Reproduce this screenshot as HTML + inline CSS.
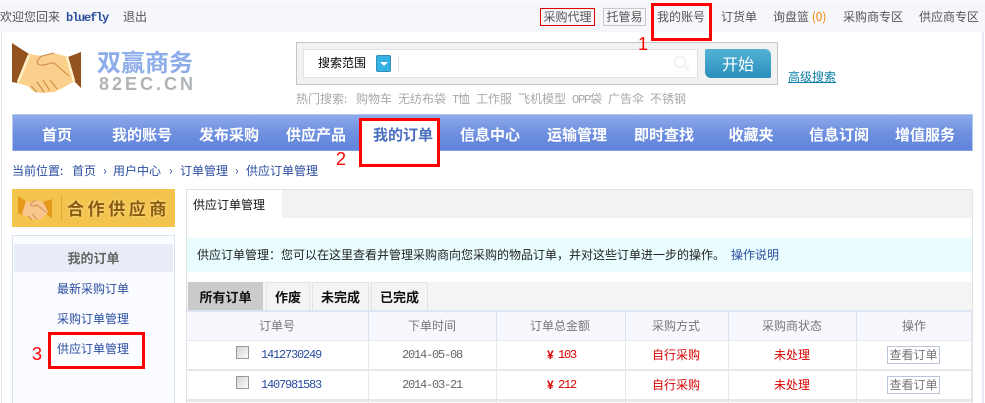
<!DOCTYPE html>
<html lang="zh-CN"><head><meta charset="utf-8"><title>供应订单管理</title>
<style>
html,body{margin:0;padding:0;background:#fff}
body{width:985px;height:403px;position:relative;overflow:hidden;font:12px/16px "WenQuanYi Zen Hei","Noto Sans CJK SC","Liberation Sans",sans-serif;color:#555}
.a{position:absolute;white-space:nowrap}
.b{position:absolute;box-sizing:border-box}
.c{position:absolute;white-space:nowrap;text-align:center;transform:translateX(-50%)}
.blue{color:#2a4d9f}
.red{color:#d80000}
.hot{position:absolute;top:91px;white-space:nowrap;color:#a8a8a8}
.nav{position:absolute;top:125px;font-size:15px;line-height:20px;font-weight:bold;color:#fff;white-space:nowrap;transform:translateX(-50%)}
.mono{font-family:"Liberation Mono",monospace;letter-spacing:-1.2px}
.rb{position:absolute;box-sizing:border-box;border:3px solid #f00}
.num{position:absolute;color:#f00;font:18px/20px "Liberation Sans",sans-serif}
.tab{position:absolute;box-sizing:border-box;top:282px;height:29px;background:#f4f4f4;border:1px solid #e2e2e2;border-bottom:0;text-align:center;line-height:28px;font-size:13px;font-weight:bold;color:#111}
.v{position:absolute;top:311px;width:1px;height:92px;background:#e4e8ef}
.vh{position:absolute;top:311px;width:1px;height:29px;background:#d8e2f0}
.cb{position:absolute;box-sizing:border-box;left:236px;width:13px;height:13px;border:1px solid #999;background:linear-gradient(135deg,#d4d4d4,#fbfbfb)}
.btn{position:absolute;box-sizing:border-box;left:887px;width:53px;height:18px;border:1px solid #b9c6d8;background:#fff;text-align:center;line-height:16px;color:#777}
</style></head><body>

<!-- frame and top bar -->
<div class="b" style="left:0;top:0;width:985px;height:32px;background:#f6f7fb"></div>
<div class="b" style="left:0;top:0;width:985px;height:2px;background:#fafafc"></div>
<div class="b" style="left:1px;top:32px;width:1px;height:371px;background:#dfe5f0"></div>
<div class="b" style="left:982px;top:32px;width:2px;height:371px;background:#e4e8f1"></div>

<div class="a" style="left:0;top:9px;color:#555">欢迎您回来</div>
<div class="a mono" style="left:66px;top:10px;color:#2a4d9f;font-weight:bold">bluefly</div>
<div class="a" style="left:123px;top:9px">退出</div>

<div class="b" style="left:540px;top:8px;width:55px;height:18px;border:1px solid #e00000;text-align:center;line-height:16px">采购代理</div>
<div class="b" style="left:603px;top:8px;width:43px;height:18px;border:1px solid #c9c9c9;text-align:center;line-height:16px">托管易</div>
<div class="a" style="left:657px;top:9px">我的账号</div>
<div class="a" style="left:721px;top:9px">订货单</div>
<div class="a" style="left:773px;top:9px">询盘篮 <span style="color:#f08300">(0)</span></div>
<div class="a" style="left:843px;top:9px">采购商专区</div>
<div class="a" style="left:919px;top:9px">供应商专区</div>

<!-- logo -->
<svg class="a" style="left:12px;top:42px" width="72" height="54" viewBox="0 0 72 54">
<path d="M0 1L17 12L5 41L0 40Z" fill="#94521f"/>
<path d="M69 10L56 15L63 40L69 46Z" fill="#94521f"/>
<path d="M17 12L5 41L16 44L22 50L30 51L43 50L63 39L56 15L42 11L30 14Z" fill="#fbd08c"/>
<path d="M17 13L6 40M55 15L62 39" stroke="#fff2c8" stroke-width="2.5" fill="none"/>
<path d="M42 11L30 14C24 18 24 22 28 23C34 24 38 20 42 21L57 34M19 44L25 50M25 40L32 50M31 38L38 49M38 38L45 47" stroke="#c88c48" stroke-width="1.1" fill="none"/>
</svg>
<div class="a" style="left:97px;top:46px;font-size:24px;line-height:30px;font-weight:bold;color:#8cacea">双赢商务</div>
<div class="a" style="left:99px;top:74px;font:bold 18px/20px 'Liberation Sans',sans-serif;color:#b0b3b6;letter-spacing:3px">82EC.CN</div>

<!-- search -->
<div class="b" style="left:296px;top:42px;width:482px;height:43px;background:#f3f2f2;border:1px solid #c6c6c6"></div>
<div class="b" style="left:303px;top:49px;width:395px;height:29px;background:#fff;border:1px solid #e2e2e2"></div>
<div class="a" style="left:318px;top:55px;color:#000">搜索范围</div>
<div class="b" style="left:376px;top:55px;width:15px;height:17px;background:#35b1e6;border:1px solid #2f8fb8;border-radius:2px"></div>
<div class="b" style="left:380px;top:62px;width:0;height:0;border:4px solid transparent;border-top:4px solid #fff;border-bottom:0"></div>
<div class="b" style="left:398px;top:55px;width:1px;height:17px;background:#e2e2e2"></div>
<svg class="a" style="left:671px;top:54px" width="20" height="18" viewBox="0 0 20 18"><circle cx="9" cy="8" r="5.5" fill="none" stroke="#f2f2f2" stroke-width="2"/><path d="M13 12L18 16" stroke="#f2f2f2" stroke-width="2.5"/></svg>
<div class="b" style="left:705px;top:49px;width:66px;height:29px;background:linear-gradient(#54b2d2,#2a8fbd);border-radius:2px 6px 2px 6px;color:#fff;font-size:16px;line-height:29px;text-align:center">开始</div>
<div class="a" style="left:788px;top:69px;color:#0b7fa5;text-decoration:underline">高级搜索</div>
<div class="hot" style="left:296px">热门搜索:</div>
<div class="hot" style="left:356px">购物车</div>
<div class="hot" style="left:398px">无纺布袋</div>
<div class="hot" style="left:452px"><span class="mono">T</span>恤</div>
<div class="hot" style="left:476px">工作服</div>
<div class="hot" style="left:518px">飞机模型</div>
<div class="hot" style="left:572px"><span class="mono">OPP</span>袋</div>
<div class="hot" style="left:608px">广告伞</div>
<div class="hot" style="left:650px">不锈钢</div>

<!-- nav -->
<div class="b" style="left:12px;top:114px;width:961px;height:37px;background:linear-gradient(#8eabec 0,#7192e0 45%,#6084db 100%);border:1px solid #b4c8e8;border-bottom-color:#7f9fe4"></div>
<div class="b" style="left:362px;top:121px;width:75px;height:43px;background:#fff"></div>
<div class="nav" style="left:57px">首页</div>
<div class="nav" style="left:142px">我的账号</div>
<div class="nav" style="left:229px">发布采购</div>
<div class="nav" style="left:316px">供应产品</div>
<div class="nav" style="left:403px;color:#4a6fbe">我的订单</div>
<div class="nav" style="left:490px">信息中心</div>
<div class="nav" style="left:577px">运输管理</div>
<div class="nav" style="left:664px">即时查找</div>
<div class="nav" style="left:751px">收藏夹</div>
<div class="nav" style="left:839px">信息订阅</div>
<div class="nav" style="left:925px">增值服务</div>

<!-- breadcrumb -->
<div class="a blue" style="left:12px;top:163px">当前位置:</div>
<div class="a blue" style="left:72px;top:163px">首页</div>
<div class="a blue" style="left:103px;top:163px">›</div>
<div class="a blue" style="left:113px;top:163px">用户中心</div>
<div class="a blue" style="left:169px;top:163px">›</div>
<div class="a blue" style="left:180px;top:163px">订单管理</div>
<div class="a blue" style="left:235px;top:163px">›</div>
<div class="a blue" style="left:246px;top:163px">供应订单管理</div>

<!-- sidebar -->
<div class="b" style="left:12px;top:189px;width:163px;height:38px;background:#f2c44e"></div>
<svg class="a" style="left:17px;top:195px" width="38" height="26" viewBox="0 0 38 26">
<path d="M1 1L9 6L5 20L1 18Z M35 4L26 7L30 20L35 23Z" fill="#e59a1e"/>
<path d="M9 6L5 19L12 22L16 25L24 24L31 17L26 7L19 5L14 7Z" fill="#f8c58d"/>
<path d="M19 5L14 8C12 11 16 12 20 10L29 17M11 21L15 25M15 19L20 24" stroke="#b87a3a" stroke-width=".7" fill="none"/>
</svg>
<div class="b" style="left:61px;top:195px;width:1px;height:26px;background:#e3a93a"></div>
<div class="a" style="left:67px;top:198px;font-size:17px;line-height:20px;font-weight:bold;color:#8a5a12;letter-spacing:3.6px;text-shadow:0 0 3px #fbe59a">合作供应商</div>

<div class="b" style="left:12px;top:235px;width:163px;height:168px;background:#fbfcff;border:1px solid #d9e2f0;border-bottom:0"></div>
<div class="b" style="left:14px;top:244px;width:159px;height:28px;background:#e8ecf6;text-align:center;line-height:28px;font-size:13px;font-weight:bold;color:#666">我的订单</div>
<div class="c blue" style="left:93px;top:281px">最新采购订单</div>
<div class="c blue" style="left:93px;top:311px">采购订单管理</div>
<div class="c blue" style="left:93px;top:341px">供应订单管理</div>

<!-- main -->
<div class="b" style="left:186px;top:189px;width:787px;height:214px;background:#fff;border:1px solid #e2e2e2;border-bottom:0"></div>
<div class="b" style="left:282px;top:190px;width:690px;height:28px;background:#f2f2f2"></div>
<div class="a" style="left:193px;top:197px;color:#111">供应订单管理</div>
<div class="b" style="left:187px;top:238px;width:785px;height:34px;background:#e9fdff"></div>
<div class="a" style="left:197px;top:247px;color:#222">供应订单管理：您可以在这里查看并管理采购商向您采购的物品订单，并对这些订单进一步的操作。</div>
<div class="a blue" style="left:731px;top:247px">操作说明</div>

<!-- tabs -->
<div class="b" style="left:187px;top:282px;width:785px;height:29px;background:#f4f4f4"></div>
<div class="tab" style="left:188px;width:75px;background:#cbcbcb;border-color:#cbcbcb">所有订单</div>
<div class="tab" style="left:266px;width:44px;background:#f4f4f4">作废</div>
<div class="tab" style="left:312px;width:57px">未完成</div>
<div class="tab" style="left:371px;width:57px">已完成</div>

<!-- table -->
<div class="b" style="left:187px;top:310px;width:785px;height:2px;background:#dde5f2"></div>
<div class="b" style="left:187px;top:312px;width:785px;height:28px;background:#f6f8fd"></div>
<div class="b" style="left:187px;top:340px;width:785px;height:1px;background:#e4e8ef"></div>
<div class="b" style="left:187px;top:369px;width:785px;height:2px;background:#e8e8e8"></div>
<div class="b" style="left:187px;top:399px;width:785px;height:3px;background:#e8e8e8"></div>
<div class="v" style="left:368px"></div><div class="v" style="left:496px"></div><div class="v" style="left:625px"></div><div class="v" style="left:728px"></div><div class="v" style="left:856px"></div><div class="v" style="left:971px"></div>
<div class="vh" style="left:368px"></div><div class="vh" style="left:496px"></div><div class="vh" style="left:625px"></div><div class="vh" style="left:728px"></div><div class="vh" style="left:856px"></div>

<div class="c" style="left:277px;top:318px;color:#777">订单号</div>
<div class="c" style="left:432px;top:318px;color:#777">下单时间</div>
<div class="c" style="left:560px;top:318px;color:#777">订单总金额</div>
<div class="c" style="left:676px;top:318px;color:#777">采购方式</div>
<div class="c" style="left:792px;top:318px;color:#777">采购商状态</div>
<div class="c" style="left:914px;top:318px;color:#777">操作</div>

<div class="cb" style="top:346px"></div>
<div class="a blue mono" style="left:261px;top:347px">1412730249</div>
<div class="a mono" style="left:402px;top:347px;color:#666">2014-05-08</div>
<div class="a red" style="left:547px;top:347px;font-family:'Liberation Sans',sans-serif;font-weight:bold">¥</div>
<div class="a red mono" style="left:558px;top:347px">103</div>
<div class="c red" style="left:676px;top:347px">自行采购</div>
<div class="c red" style="left:792px;top:347px">未处理</div>
<div class="btn" style="top:346px">查看订单</div>

<div class="cb" style="top:376px"></div>
<div class="a blue mono" style="left:261px;top:377px">1407981583</div>
<div class="a mono" style="left:402px;top:377px;color:#666">2014-03-21</div>
<div class="a red" style="left:547px;top:377px;font-family:'Liberation Sans',sans-serif;font-weight:bold">¥</div>
<div class="a red mono" style="left:558px;top:377px">212</div>
<div class="c red" style="left:676px;top:377px">自行采购</div>
<div class="c red" style="left:792px;top:377px">未处理</div>
<div class="btn" style="top:376px">查看订单</div>

<!-- annotations -->
<div class="rb" style="left:651px;top:3px;width:61px;height:38px"></div>
<div class="rb" style="left:359px;top:118px;width:81px;height:49px"></div>
<div class="rb" style="left:48px;top:332px;width:97px;height:37px"></div>
<div class="num" style="left:638px;top:34px">1</div>
<div class="num" style="left:336px;top:149px">2</div>
<div class="num" style="left:32px;top:344px">3</div>
</body></html>
